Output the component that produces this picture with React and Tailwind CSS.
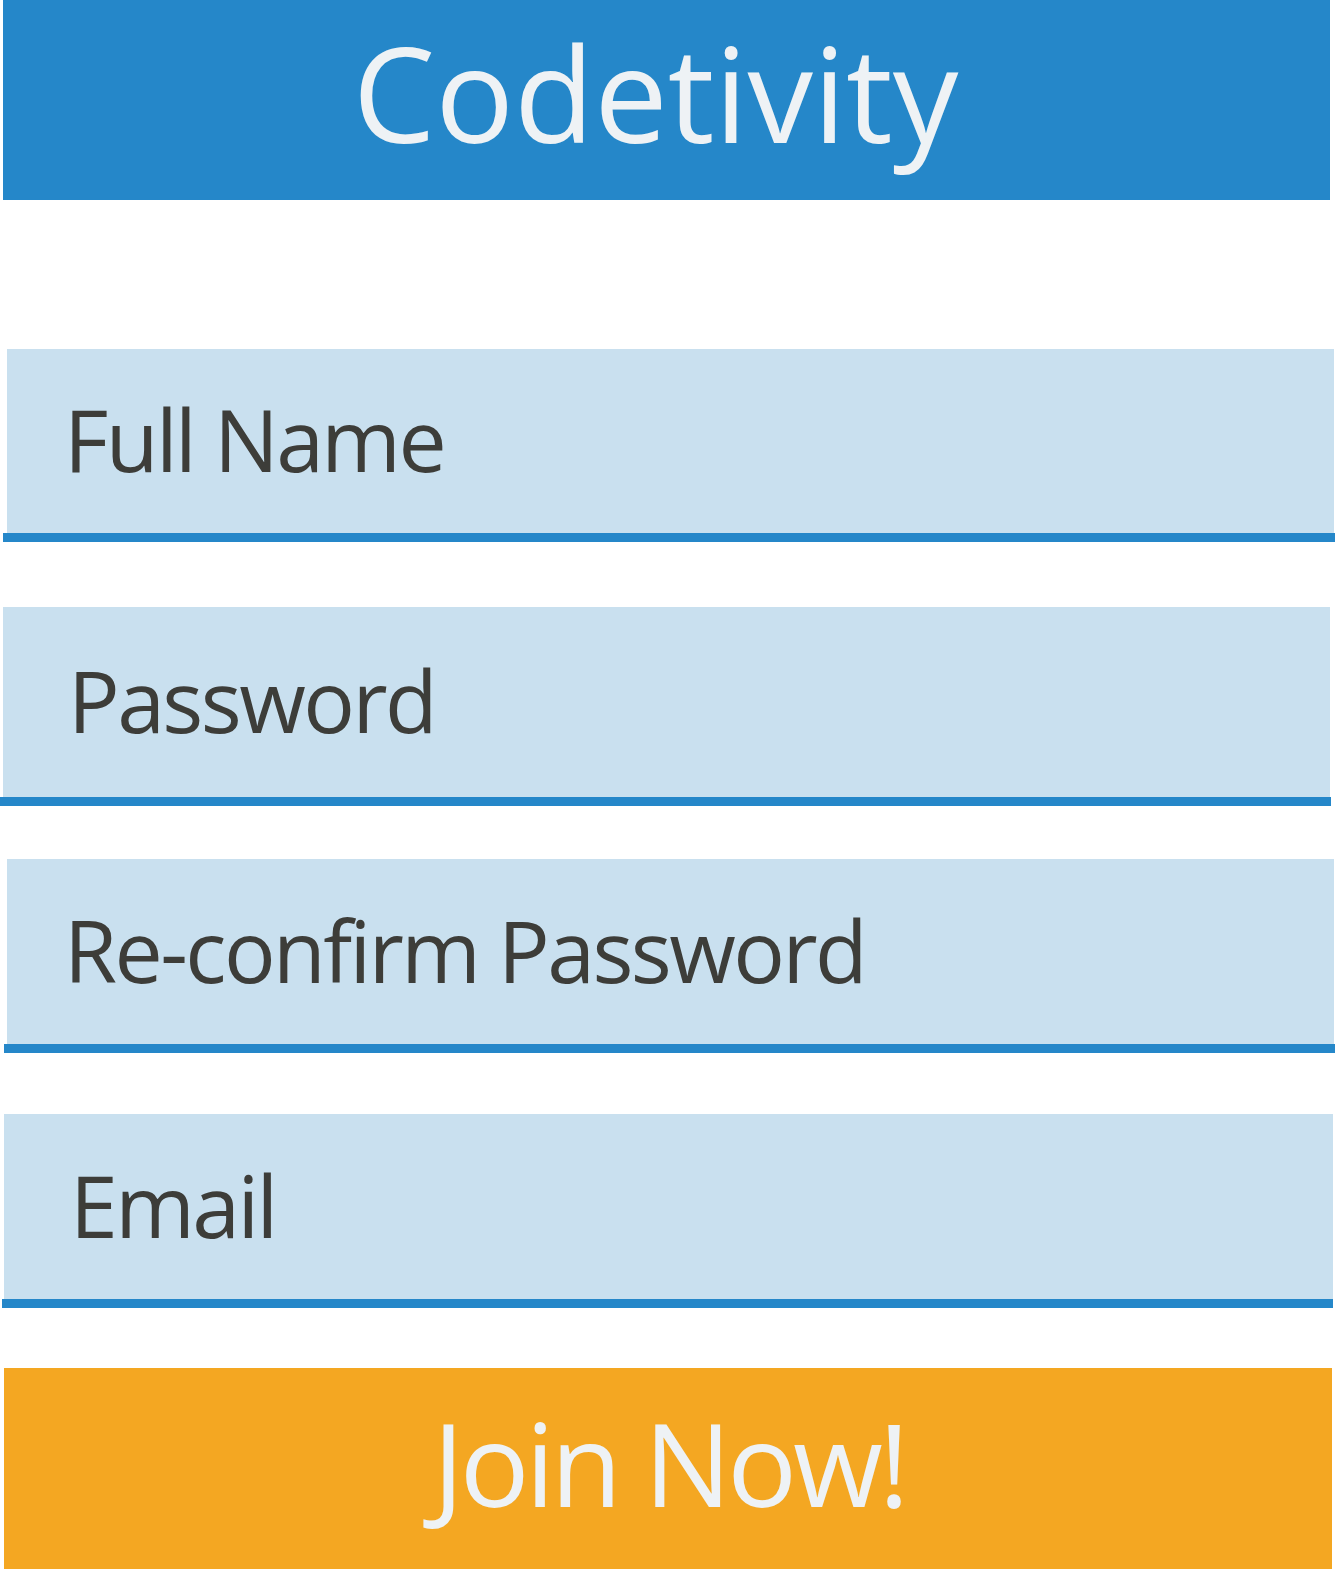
const FIELDS = [
  { label: 'Full Name', box: 'ml-[7px] w-[1327px] h-[184px] mt-[149px]', line: 'ml-[3px] w-[1332px]', pad: 'pl-[57px]' },
  { label: 'Password', box: 'ml-[3px] w-[1327px] h-[190px] mt-[65px]', line: 'ml-0 w-[1331px]', pad: 'pl-[65px]' },
  { label: 'Re-confirm Password', box: 'ml-[7px] w-[1327px] h-[185px] mt-[53px]', line: 'ml-[4px] w-[1331px]', pad: 'pl-[57px]' },
  { label: 'Email', box: 'ml-[4px] w-[1329px] h-[185px] mt-[61px]', line: 'ml-[2px] w-[1331px]', pad: 'pl-[66px]' },
];

function Field({ label, box, line, pad }) {
  return (
    <div className="flex flex-col">
      <div className={`${box} ${pad} pb-[4px] bg-[#c9e0ef] flex items-center`}>
        <span className="text-[86px] leading-none tracking-[-0.03em] text-[#3d3d39]">{label}</span>
      </div>
      <div className={`${line} h-[9px] bg-[#2587c9]`} />
    </div>
  );
}

export default function App() {
  return (
    <div className="w-[1336px] h-[1569px] bg-white overflow-hidden flex flex-col font-['Open_Sans',sans-serif]">
      <header className="ml-[3px] w-[1327px] h-[200px] pb-[15px] bg-[#2587c9] flex items-center justify-center">
        <h1 className="mr-[22px] text-[131px] leading-none tracking-normal text-[#eef2f5] font-normal">Codetivity</h1>
      </header>
      {FIELDS.map((f) => (
        <Field key={f.label} {...f} />
      ))}
      <button className="ml-[4px] mt-[60px] w-[1328px] h-[201px] pb-[14px] bg-[#f4a722] flex items-center justify-center">
        <span className="ml-[2px] text-[116px] leading-none tracking-[-0.035em] text-[#eef2f5]">Join Now!</span>
      </button>
    </div>
  );
}
